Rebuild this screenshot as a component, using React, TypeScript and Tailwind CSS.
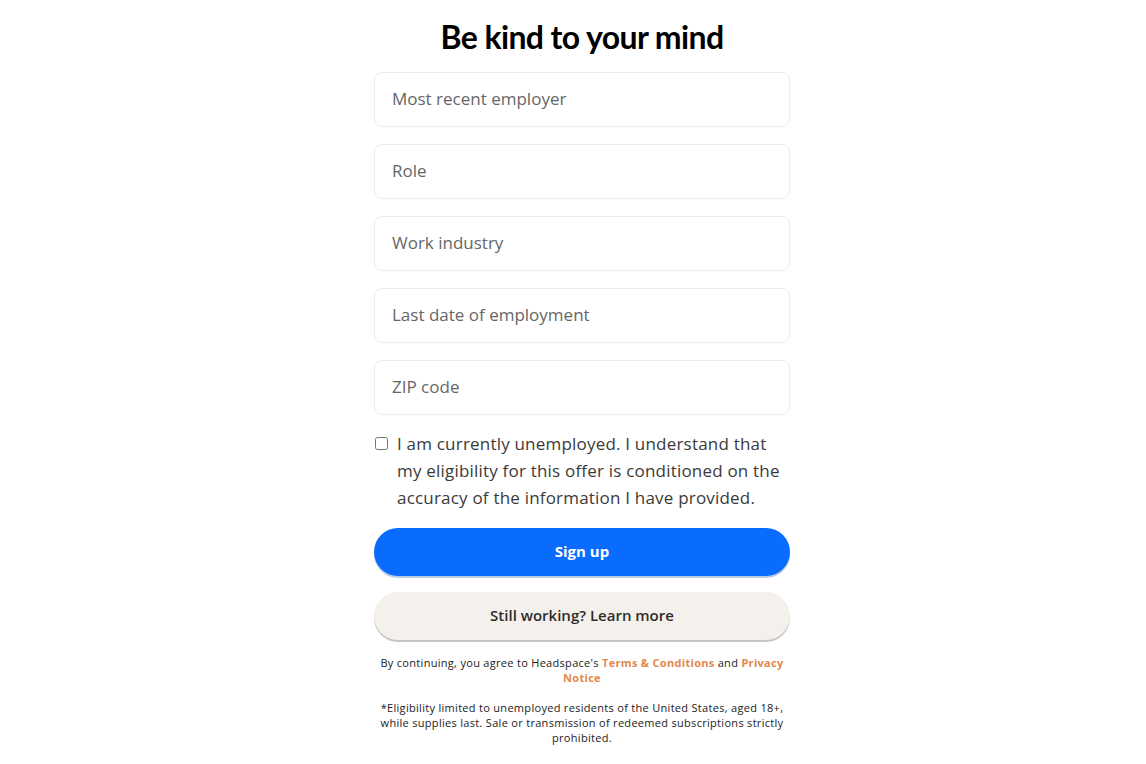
import { useState } from 'react'

const FIELDS = ['Most recent employer', 'Role', 'Work industry', 'Last date of employment', 'ZIP code']

export default function App() {
  const [checked, setChecked] = useState(false)

  return (
    <div className="flex min-h-screen justify-center bg-white pl-[18px] font-['Open_Sans',sans-serif] text-[#1f1f1f]">
      <div className="flex w-[416px] flex-col pt-[17px]">
        <h1 className="text-center font-['Lato',sans-serif] text-[32px] leading-[40px] font-bold tracking-[-0.6px] text-black">
          Be kind to your mind
        </h1>

        {/* Form fields */}
        <div className="mt-[15px] flex flex-col gap-[17px]">
          {FIELDS.map((f) => (
            <input
              key={f}
              placeholder={f}
              className="h-[55px] w-full rounded-[8px] border border-[#ececec] bg-white px-[17px] pb-[2px] text-[17px] text-[#333] placeholder:text-[#666] focus:outline-none"
            />
          ))}
        </div>

        {/* Consent */}
        <label className="mt-[15px] flex items-start gap-[9px]">
          <input
            type="checkbox"
            checked={checked}
            onChange={() => setChecked(!checked)}
            className="mt-[7px] ml-[1px] h-[13px] w-[13px] shrink-0"
          />
          <span className="text-[17px] leading-[27px] tracking-[0.2px] text-[#3a3a3a]">
            I am currently unemployed. I understand that my eligibility for this offer is conditioned on the
            accuracy of the information I have provided.
          </span>
        </label>

        {/* Actions */}
        <button className="mt-[17px] h-[48px] w-full rounded-full bg-[#0a6cff] pb-[1px] text-[15px] font-bold text-white shadow-[0_2px_0_#b8cbe6]">
          Sign up
        </button>
        <button className="mt-[16px] h-[48px] w-full rounded-full bg-[#f4f1ec] pb-[1px] text-[15px] font-semibold text-[#2d2c2b] shadow-[0_2px_0_#c9c6c1]">
          Still working? Learn more
        </button>

        <div className="mt-[15px] flex flex-col gap-[15px] px-[3px] text-center text-[11px] leading-[15px] tracking-[0.3px] text-[#222]">
          <p>
            By continuing, you agree to Headspace's{' '}
            <a className="font-bold text-[#e4874c]">Terms &amp; Conditions</a> and{' '}
            <a className="font-bold text-[#e4874c]">Privacy Notice</a>
          </p>
          <p>
            *Eligibility limited to unemployed residents of the United States, aged 18+, while supplies last. Sale
            or transmission of redeemed subscriptions strictly prohibited.
          </p>
        </div>
      </div>
    </div>
  )
}
